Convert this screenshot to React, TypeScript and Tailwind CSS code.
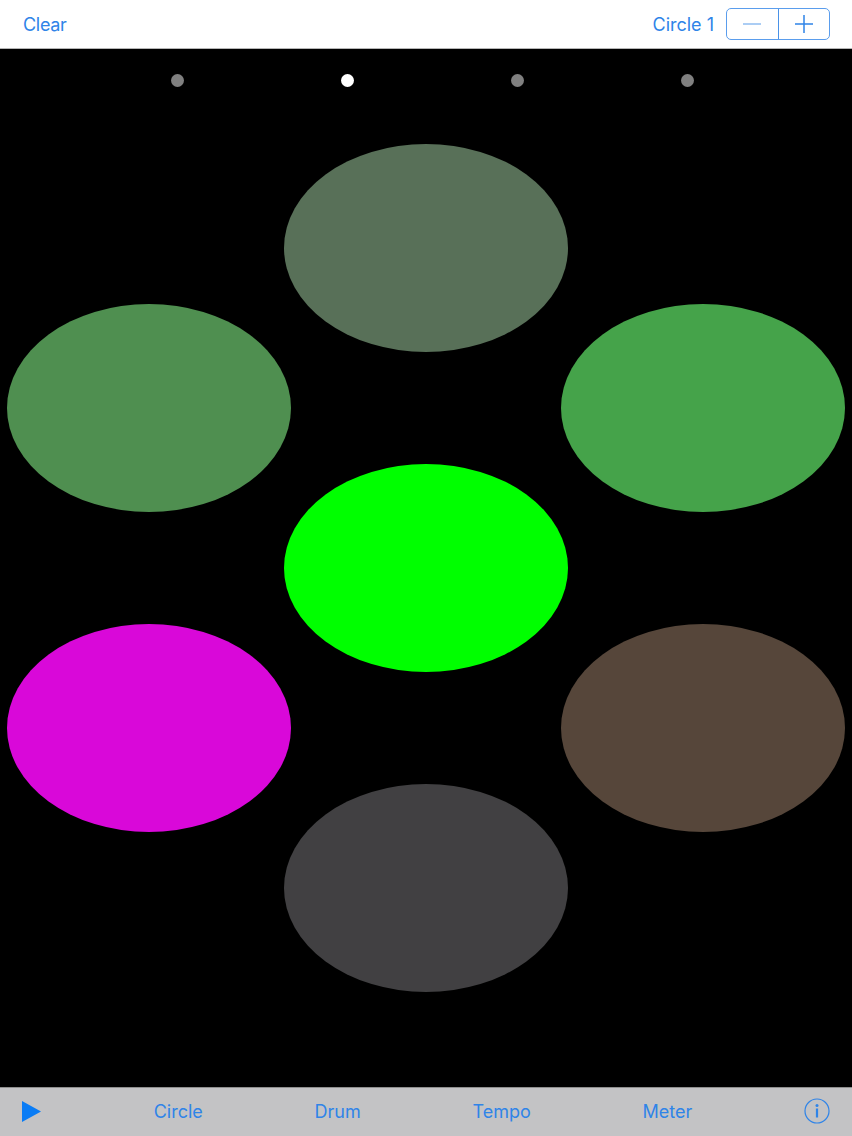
const blue = "text-[#2f84e8]";

function Ellipse({ color }: { color: string }) {
  return <div className={`h-[208px] w-[284px] rounded-[50%] ${color}`} />;
}

function Dot({ on }: { on?: boolean }) {
  return (
    <div className="flex justify-center">
      <div className={on ? "h-[13px] w-[13px] rounded-full bg-white" : "h-[13px] w-[13px] rounded-full bg-[#808080]"} />
    </div>
  );
}

export default function App() {
  return (
    <div className="flex h-[1136px] w-[852px] flex-col overflow-hidden bg-black font-['Inter','Liberation_Sans',sans-serif] text-[18px]">
      <header className="flex h-[49px] items-center border-b border-[#b5b5b5] bg-white pl-[23px] pr-[22px]">
        <span className={`tracking-[-0.3px] ${blue}`}>Clear</span>
        <span className={`ml-auto ${blue}`}>Circle 1</span>
        <div className="ml-[12px] flex h-[32px] w-[104px] rounded-[5px] border border-[#5a9ded]">
          <div className="flex flex-1 items-center justify-center border-r border-[#4a92e8]">
            <svg width="18" height="18" viewBox="0 0 18 18">
              <path d="M0 9H18" stroke="#8fbcf0" strokeWidth="1.5" />
            </svg>
          </div>
          <div className="flex flex-1 items-center justify-center">
            <svg width="18" height="18" viewBox="0 0 18 18">
              <path d="M0 9H18M9 0V18" stroke="#2f84e8" strokeWidth="1.5" />
            </svg>
          </div>
        </div>
      </header>

      <main className="flex-1 bg-black">
        <div className="grid grid-cols-4 pl-[92px] pr-[79px] pt-[25px]">
          <Dot />
          <Dot on />
          <Dot />
          <Dot />
        </div>
        <div className="mt-[57px] flex justify-center gap-0">
          <div className="flex flex-col gap-[112px] pt-[160px]">
            <Ellipse color="bg-[#4f8f50]" />
            <Ellipse color="bg-[#d908d9]" />
          </div>
          <div className="-mx-[7px] flex flex-col gap-[112px]">
            <Ellipse color="bg-[#587058]" />
            <Ellipse color="bg-[#00ff00]" />
            <Ellipse color="bg-[#414042]" />
          </div>
          <div className="flex flex-col gap-[112px] pt-[160px]">
            <Ellipse color="bg-[#45a34a]" />
            <Ellipse color="bg-[#56463a]" />
          </div>
        </div>
      </main>

      <footer className="flex h-[49px] items-center justify-between border-t border-[#8e8e8e] bg-[#c3c3c5] pb-[2px] pl-[21px] pr-[22px]">
        <svg width="21" height="21" viewBox="0 0 21 21" className="block">
          <path d="M1 0L20 10.5L1 21Z" fill="#0a7cf5" />
        </svg>
        <span className={blue}>Circle</span>
        <span className={blue}>Drum</span>
        <span className={blue}>Tempo</span>
        <span className={blue}>Meter</span>
        <svg width="26" height="26" viewBox="0 0 26 26" className="block">
          <circle cx="13" cy="13" r="12" fill="none" stroke="#2f84e8" strokeWidth="1.2" />
          <circle cx="13" cy="7.6" r="1.5" fill="#2f84e8" />
          <path d="M13 10.5V19.5" stroke="#2f84e8" strokeWidth="2.2" />
        </svg>
      </footer>
    </div>
  );
}
